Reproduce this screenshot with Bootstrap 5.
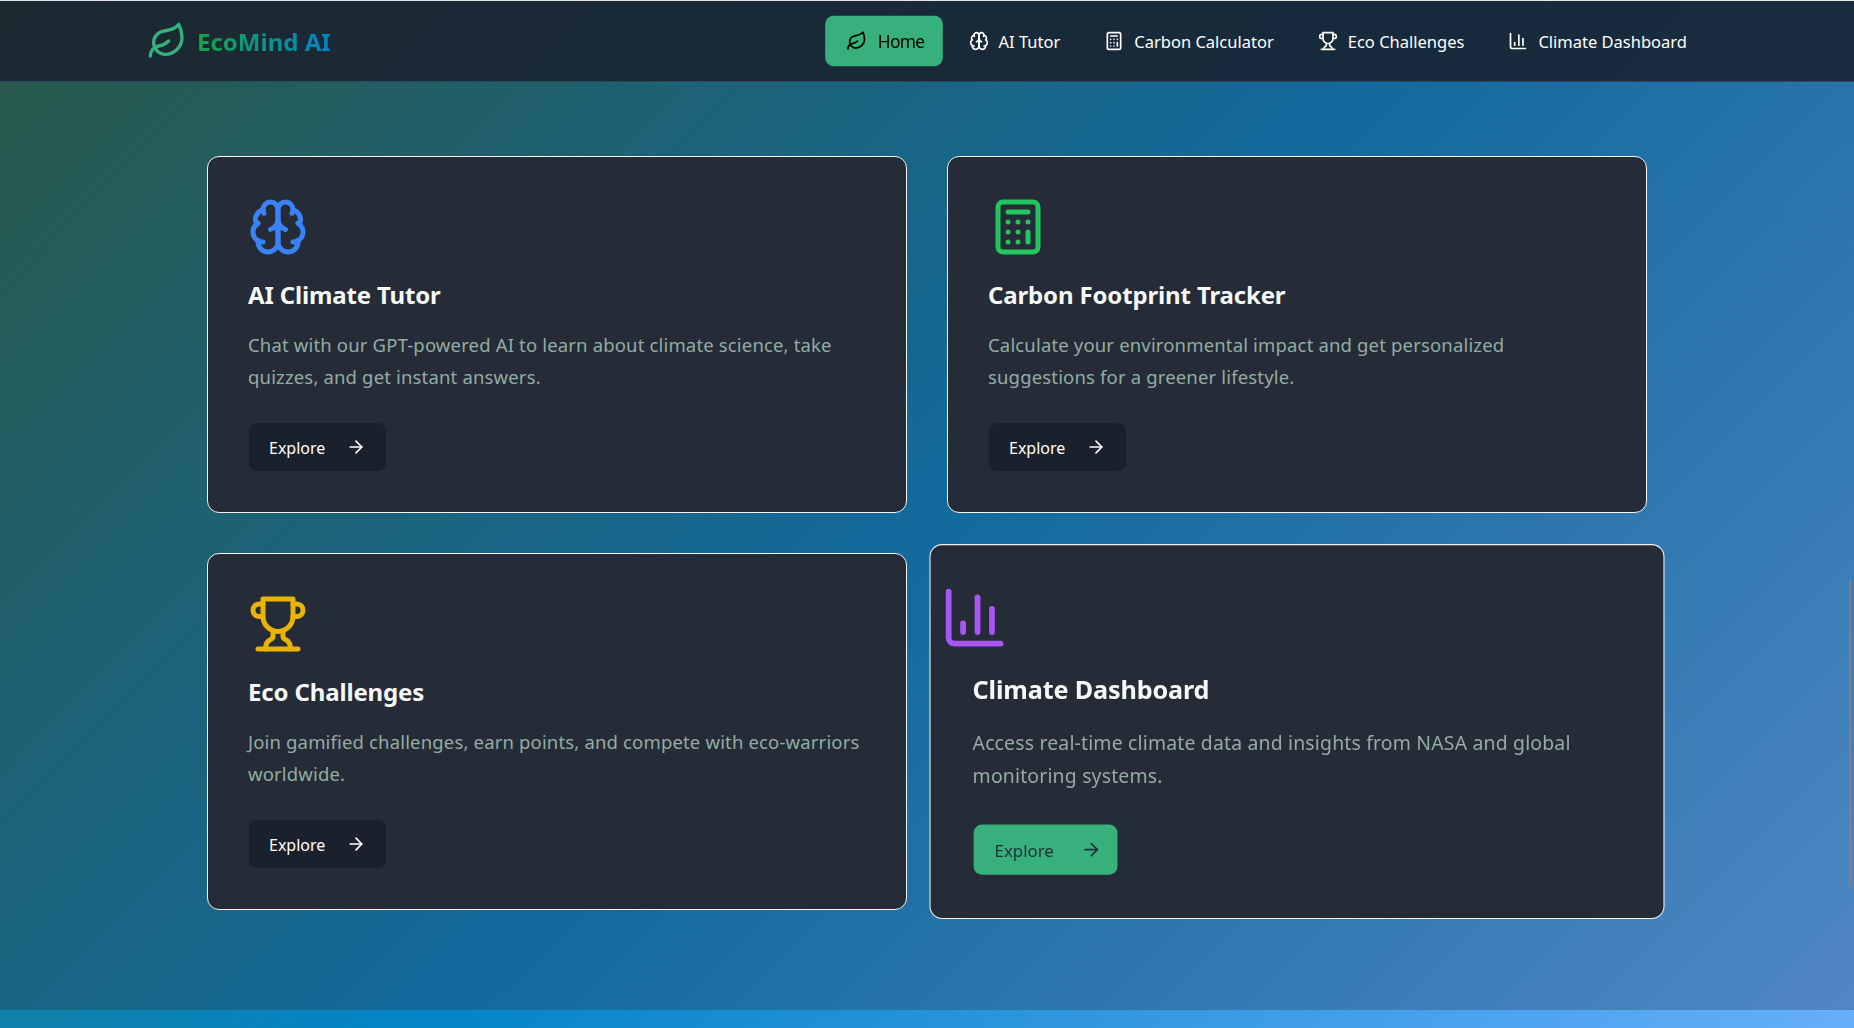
<!DOCTYPE html>
<html lang="en">
<head>
<meta charset="utf-8">
<title>EcoMind AI</title>
<link href="https://cdn.jsdelivr.net/npm/bootstrap@5.3.0/dist/css/bootstrap.min.css" rel="stylesheet">
<style>
html,body{height:100%;}
body{margin:0;overflow:hidden;font-family:"Noto Sans","Open Sans",sans-serif;color:#fff;
  background:linear-gradient(135deg,#35785f 0%,#0284c7 50%,#66aefb 100%);}
.eco-main{background:linear-gradient(135deg,#28594b 0%,#126a9e 50%,#5087c2 100%);height:928px;}
.eco-nav{height:82px;padding:0;background:rgba(26,32,44,.9);border-top:1px solid #e6e8ea;border-bottom:1px solid #2b4a60;}
.eco-nav-inner{width:1560px;margin:0 auto;display:flex;align-items:center;justify-content:space-between;}
.eco-brand{display:flex;align-items:center;gap:10px;padding:0;margin:0;font-size:24px;font-weight:700;}
.eco-brand-text{background:linear-gradient(90deg,#16a34a,#0284c7);-webkit-background-clip:text;background-clip:text;color:transparent;padding-top:2px;}
.eco-links{gap:4px;}
.eco-link{display:flex;align-items:center;gap:10px;padding:13px 20px 11px;height:48px;border-radius:8px;color:#fff;font-size:16.5px;}
.eco-link svg{margin-top:-2px;}
.eco-link:hover{color:#fff;}
.eco-link.active{background:#38b07c;color:#17282b;transform:scale(1.05);padding-right:17px;letter-spacing:-.6px;margin-right:5px;}
.eco-content{width:1440px;margin:0 auto;padding-top:74px;display:grid;grid-template-columns:700px 700px;gap:40px;}
.eco-card{background:#252b37;border:1px solid #f2f4f5;border-radius:12px;padding:40px;height:357px;}
.eco-card-hover{transform:scale(1.05);}
.eco-icon{display:block;width:60px;height:60px;margin-bottom:20.3px;fill:none;stroke-width:2;stroke-linecap:round;stroke-linejoin:round;}
.eco-icon-shift{transform:translate(-28px,-1px) scale(1.1);}
.eco-title{font-size:24px;font-weight:700;line-height:36px;color:#f4f8f6;margin:0 0 16px;letter-spacing:-.15px;}
.eco-text{font-size:18.5px;line-height:31.7px;color:#93ada3;margin:0 0 30.5px;letter-spacing:.16px;}
.eco-btn{display:inline-flex;align-items:center;height:48px;width:137px;margin-left:1px;padding:14px 20px 12px;border:0;border-radius:8px;background:#1a202c;color:#fff;font-size:16px;}
.eco-btn:hover{color:#fff;background:#1a202c;}
.eco-btn svg{margin-left:auto;margin-top:-2px;width:20px;height:20px;fill:none;stroke:currentColor;stroke-width:2;stroke-linecap:round;stroke-linejoin:round;}
.eco-btn-hover,.eco-btn-hover:hover{background:#38b07c;color:#1c3038;}
.eco-btn-hover svg{transform:translateX(5px);}
.eco-nav-icon{width:20px;height:20px;fill:none;stroke:currentColor;stroke-width:2;stroke-linecap:round;stroke-linejoin:round;}
.eco-thumb{position:fixed;left:1849px;top:580px;width:2px;height:307px;background:#7b8088;}
</style>
</head>
<body>
<nav class="navbar eco-nav">
  <div class="eco-nav-inner">
    <a class="navbar-brand eco-brand" href="#">
      <svg width="40" height="40" viewBox="0 0 24 24" fill="none" stroke="#38b07c" stroke-width="2" stroke-linecap="round" stroke-linejoin="round"><path d="M11 20A7 7 0 0 1 9.8 6.1C15.5 5 17 4.48 19 2c1 2 2 4.18 2 8 0 5.5-4.78 10-10 10Z"/><path d="M2 21c0-3 1.85-5.36 5.08-6C9.5 14.52 12 13 13 12"/></svg>
      <span class="eco-brand-text">EcoMind AI</span>
    </a>
    <ul class="navbar-nav flex-row eco-links">
      <li class="nav-item"><a class="nav-link eco-link active" href="#"><svg class="eco-nav-icon" viewBox="0 0 24 24"><path d="M11 20A7 7 0 0 1 9.8 6.1C15.5 5 17 4.48 19 2c1 2 2 4.18 2 8 0 5.5-4.78 10-10 10Z"/><path d="M2 21c0-3 1.85-5.36 5.08-6C9.5 14.52 12 13 13 12"/></svg>Home</a></li>
      <li class="nav-item"><a class="nav-link eco-link" href="#"><svg class="eco-nav-icon" viewBox="0 0 24 24"><path d="M12 5a3 3 0 1 0-5.997.125 4 4 0 0 0-2.526 5.77 4 4 0 0 0 .556 6.588A4 4 0 1 0 12 18Z"/><path d="M12 5a3 3 0 1 1 5.997.125 4 4 0 0 1 2.526 5.77 4 4 0 0 1-.556 6.588A4 4 0 1 1 12 18Z"/><path d="M15 13a4.5 4.5 0 0 1-3-4 4.5 4.5 0 0 1-3 4"/><path d="M17.599 6.5a3 3 0 0 0 .399-1.375"/><path d="M6.003 5.125A3 3 0 0 0 6.401 6.5"/><path d="M3.477 10.896a4 4 0 0 1 .585-.396"/><path d="M19.938 10.5a4 4 0 0 1 .585.396"/><path d="M6 18a4 4 0 0 1-1.967-.516"/><path d="M19.967 17.484A4 4 0 0 1 18 18"/></svg>AI Tutor</a></li>
      <li class="nav-item"><a class="nav-link eco-link" href="#"><svg class="eco-nav-icon" viewBox="0 0 24 24"><rect width="16" height="20" x="4" y="2" rx="2"/><line x1="8" x2="16" y1="6" y2="6"/><line x1="16" x2="16" y1="14" y2="18"/><path d="M16 10h.01"/><path d="M12 10h.01"/><path d="M8 10h.01"/><path d="M12 14h.01"/><path d="M8 14h.01"/><path d="M12 18h.01"/><path d="M8 18h.01"/></svg>Carbon Calculator</a></li>
      <li class="nav-item"><a class="nav-link eco-link" href="#"><svg class="eco-nav-icon" viewBox="0 0 24 24"><path d="M6 9H4.5a2.5 2.5 0 0 1 0-5H6"/><path d="M18 9h1.5a2.5 2.5 0 0 0 0-5H18"/><path d="M4 22h16"/><path d="M10 14.66V17c0 .55-.47.98-.97 1.21C7.85 18.75 7 20.24 7 22"/><path d="M14 14.66V17c0 .55.47.98.97 1.21C16.15 18.75 17 20.24 17 22"/><path d="M18 2H6v7a6 6 0 0 0 12 0V2Z"/></svg>Eco Challenges</a></li>
      <li class="nav-item"><a class="nav-link eco-link" href="#"><svg class="eco-nav-icon" viewBox="0 0 24 24"><path d="M3 3v16a2 2 0 0 0 2 2h16"/><path d="M18 17V9"/><path d="M13 17V5"/><path d="M8 17v-3"/></svg>Climate Dashboard</a></li>
    </ul>
  </div>
</nav>
<main class="eco-main">
  <div class="eco-content">
    <div class="card eco-card">
      <svg class="eco-icon" stroke="#3b82f6" viewBox="0 0 24 24"><path d="M12 5a3 3 0 1 0-5.997.125 4 4 0 0 0-2.526 5.77 4 4 0 0 0 .556 6.588A4 4 0 1 0 12 18Z"/><path d="M12 5a3 3 0 1 1 5.997.125 4 4 0 0 1 2.526 5.77 4 4 0 0 1-.556 6.588A4 4 0 1 1 12 18Z"/><path d="M15 13a4.5 4.5 0 0 1-3-4 4.5 4.5 0 0 1-3 4"/><path d="M17.599 6.5a3 3 0 0 0 .399-1.375"/><path d="M6.003 5.125A3 3 0 0 0 6.401 6.5"/><path d="M3.477 10.896a4 4 0 0 1 .585-.396"/><path d="M19.938 10.5a4 4 0 0 1 .585.396"/><path d="M6 18a4 4 0 0 1-1.967-.516"/><path d="M19.967 17.484A4 4 0 0 1 18 18"/></svg>
      <h3 class="eco-title">AI Climate Tutor</h3>
      <p class="eco-text">Chat with our GPT-powered AI to learn about climate science, take quizzes, and get instant answers.</p>
      <div><a class="btn eco-btn" href="#">Explore<svg viewBox="0 0 24 24"><path d="M5 12h14"/><path d="m12 5 7 7-7 7"/></svg></a></div>
    </div>
    <div class="card eco-card">
      <svg class="eco-icon" stroke="#22c55e" viewBox="0 0 24 24"><rect width="16" height="20" x="4" y="2" rx="2"/><line x1="8" x2="16" y1="6" y2="6"/><line x1="16" x2="16" y1="14" y2="18"/><path d="M16 10h.01"/><path d="M12 10h.01"/><path d="M8 10h.01"/><path d="M12 14h.01"/><path d="M8 14h.01"/><path d="M12 18h.01"/><path d="M8 18h.01"/></svg>
      <h3 class="eco-title">Carbon Footprint Tracker</h3>
      <p class="eco-text">Calculate your environmental impact and get personalized suggestions for a greener lifestyle.</p>
      <div><a class="btn eco-btn" href="#">Explore<svg viewBox="0 0 24 24"><path d="M5 12h14"/><path d="m12 5 7 7-7 7"/></svg></a></div>
    </div>
    <div class="card eco-card">
      <svg class="eco-icon" stroke="#eab308" viewBox="0 0 24 24"><path d="M6 9H4.5a2.5 2.5 0 0 1 0-5H6"/><path d="M18 9h1.5a2.5 2.5 0 0 0 0-5H18"/><path d="M4 22h16"/><path d="M10 14.66V17c0 .55-.47.98-.97 1.21C7.85 18.75 7 20.24 7 22"/><path d="M14 14.66V17c0 .55.47.98.97 1.21C16.15 18.75 17 20.24 17 22"/><path d="M18 2H6v7a6 6 0 0 0 12 0V2Z"/></svg>
      <h3 class="eco-title">Eco Challenges</h3>
      <p class="eco-text">Join gamified challenges, earn points, and compete with eco-warriors worldwide.</p>
      <div><a class="btn eco-btn" href="#">Explore<svg viewBox="0 0 24 24"><path d="M5 12h14"/><path d="m12 5 7 7-7 7"/></svg></a></div>
    </div>
    <div class="card eco-card eco-card-hover">
      <svg class="eco-icon eco-icon-shift" stroke="#a855f7" viewBox="0 0 24 24"><path d="M3 3v16a2 2 0 0 0 2 2h16"/><path d="M18 17V9"/><path d="M13 17V5"/><path d="M8 17v-3"/></svg>
      <h3 class="eco-title">Climate Dashboard</h3>
      <p class="eco-text">Access real-time climate data and insights from NASA and global monitoring systems.</p>
      <div><a class="btn eco-btn eco-btn-hover" href="#">Explore<svg viewBox="0 0 24 24"><path d="M5 12h14"/><path d="m12 5 7 7-7 7"/></svg></a></div>
    </div>
  </div>
</main>
<div class="eco-thumb"></div>
<script src="https://cdn.jsdelivr.net/npm/bootstrap@5.3.0/dist/js/bootstrap.bundle.min.js"></script>
</body>
</html>
